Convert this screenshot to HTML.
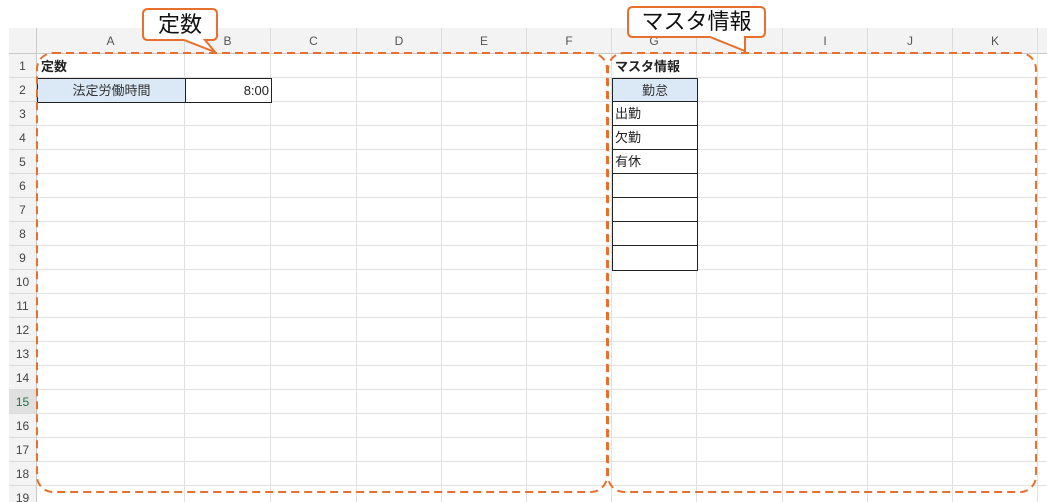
<!DOCTYPE html>
<html><head><meta charset="utf-8"><style>
html,body{margin:0;width:1047px;height:502px;background:#fff;overflow:hidden;position:relative;font-family:"Liberation Sans","Noto Sans CJK JP",sans-serif;}
.a{position:absolute;box-sizing:border-box;}
.ch{top:28px;height:26px;background:#f3f3f3;border-right:1px solid #dcdcdc;border-bottom:1px solid #c8c8c8;font-size:12px;color:#555;text-align:center;line-height:26px;}
.rh{left:9px;width:28px;height:24px;background:#f3f3f3;border-bottom:1px solid #dcdcdc;border-right:1px solid #c8c8c8;font-size:12px;color:#444;text-align:center;line-height:24px;}
.vl{top:54px;height:448px;width:1px;background:#e1e1e1;}
.hl{left:37px;width:1010px;height:1px;background:#e1e1e1;}
.t{font-size:13px;color:#222;line-height:23px;}
</style></head><body>
<div class="a" style="left:9px;top:28px;width:28px;height:26px;background:#f3f3f3;border-right:1px solid #c8c8c8;border-bottom:1px solid #c8c8c8"></div>
<div class="a" style="left:37px;top:28px;width:1010px;height:26px;background:#f3f3f3"></div>
<div class="a ch" style="left:37px;width:148px">A</div>
<div class="a ch" style="left:185px;width:86px">B</div>
<div class="a ch" style="left:271px;width:86px">C</div>
<div class="a ch" style="left:357px;width:85px">D</div>
<div class="a ch" style="left:442px;width:85px">E</div>
<div class="a ch" style="left:527px;width:85px">F</div>
<div class="a ch" style="left:612px;width:85px">G</div>
<div class="a ch" style="left:697px;width:86px">H</div>
<div class="a ch" style="left:783px;width:85px">I</div>
<div class="a ch" style="left:868px;width:85px">J</div>
<div class="a ch" style="left:953px;width:85px">K</div>
<div class="a ch" style="left:1038px;width:9px;border-right:none"></div>
<div id="rows"></div>
<script>
var h='';for(var i=1;i<=19;i++){var y=54+(i-1)*24;h+='<div class="a rh" style="top:'+y+'px;'+(i==15?'background:#e0e0e0;color:#217346;':'')+'">'+i+'</div><div class="a hl" style="top:'+(y+23)+'px"></div>';}
[185,271,357,442,527,612,697,783,868,953,1038].forEach(function(x){h+='<div class="a vl" style="left:'+(x-1)+'px"></div>';});
document.getElementById('rows').innerHTML=h;
</script>
<div class="a t" style="left:41px;top:55px;font-weight:bold">定数</div>
<div class="a" style="left:37px;top:78px;width:149px;height:25px;background:#dbe9f7;border:1px solid #222;font-size:13px;color:#333;text-align:center;line-height:23px">法定労働時間</div>
<div class="a" style="left:185px;top:78px;width:87px;height:25px;border:1px solid #222;font-size:13px;color:#222;text-align:right;padding-right:2px;line-height:23px;background:#fff">8:00</div>
<div class="a t" style="left:615px;top:55px;font-weight:bold">マスタ情報</div>
<div class="a" style="left:612px;top:78px;width:86px;height:193px;border:1px solid #222;background:#fff"></div>
<div class="a" style="left:613px;top:79px;width:84px;height:23px;background:#dbe9f7;font-size:13px;color:#333;text-align:center;line-height:23px">勤怠</div>
<script>
var s='',L=['出勤','欠勤','有休','','','',''];for(var k=0;k<7;k++){s+='<div class="a" style="left:612px;top:'+(102+k*24-1)+'px;width:86px;height:1px;background:#222"></div>';}
L.forEach(function(t,k){s+='<div class="a t" style="left:615px;top:'+(102+k*24)+'px">'+t+'</div>';});
document.write(s);
</script>
<svg class="a" style="left:0;top:0" width="1047" height="502">
<g fill="none" stroke="#e8702e" stroke-width="2" stroke-dasharray="8,5">
<rect x="37" y="53" width="570" height="439" rx="16"/>
<rect x="608" y="53" width="428" height="439" rx="16"/>
</g>
<g stroke="#e8702e" stroke-width="2" fill="#fff">
<path d="M148 9 H212 Q217 9 217 14 V35 Q217 40 212 40 H205 L215 52 L184 40 H148 Q143 40 143 35 V14 Q143 9 148 9 Z"/>
<path d="M633 7 H760 Q765 7 765 12 V32 Q765 37 760 37 H745 L745 51 L710 37 H633 Q628 37 628 32 V12 Q628 7 633 7 Z"/>
</g>
</svg>
<div class="a" style="left:143px;top:9px;width:74px;height:31px;text-align:center;font-size:22px;line-height:31px;color:#111">定数</div>
<div class="a" style="left:628px;top:7px;width:137px;height:30px;text-align:center;font-size:22px;line-height:30px;color:#111">マスタ情報</div>
</body></html>
